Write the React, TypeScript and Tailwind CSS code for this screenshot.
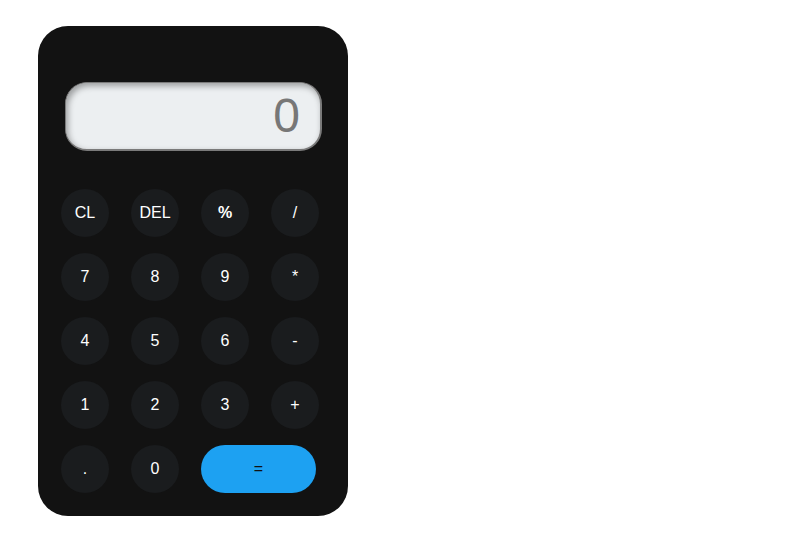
import React from 'react';

const keys = ['CL', 'DEL', '%', '/', '7', '8', '9', '*', '4', '5', '6', '-', '1', '2', '3', '+', '.', '0'];

export default function App() {
  return (
    <div className="min-h-[555px] bg-white pt-[26px] pl-[38px] font-['Liberation_Sans',Arial,sans-serif]">
      <div className="w-[310px] h-[490px] rounded-[30px] bg-[#121212] pt-[56px]">
        <div className="ml-[27px] w-[257px] h-[69px] rounded-[22px] bg-[#eceff1] border border-[#7a7a7a] border-b-2 border-r-2 shadow-[inset_2px_3px_6px_rgba(0,0,0,0.35)] flex items-center justify-end pr-[20px]">
          <span className="text-[48px] leading-none text-[#777]">0</span>
        </div>
        <div className="mt-[38px] ml-[23px] grid grid-cols-[repeat(4,48px)] gap-x-[22px] gap-y-[16px]">
          {keys.map((k) => (
            <button
              key={k}
              className={`w-12 h-12 rounded-full bg-[#1a1c1e] text-white text-base flex items-center justify-center ${k === '%' ? 'font-bold' : ''}`}
            >
              {k}
            </button>
          ))}
          <button className="col-span-2 w-[115px] h-12 rounded-full bg-[#1da1f2] text-[#111] text-base flex items-center justify-center">
            =
          </button>
        </div>
      </div>
    </div>
  );
}
